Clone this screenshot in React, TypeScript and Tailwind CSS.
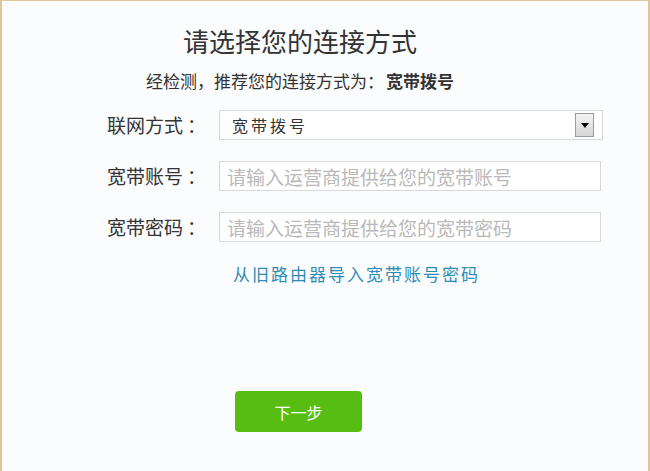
import React from "react";

const font = { fontFamily: '"Noto Sans CJK SC", "Noto Sans", sans-serif' };

const Label: React.FC<{ text: string }> = ({ text }) => (
  <div className="w-[112px] shrink-0 text-[19px] leading-[30px] text-[#333]">
    {text}
    <span className="ml-[4px]">：</span>
  </div>
);

const App: React.FC = () => {
  return (
    <div
      className="w-[650px] h-[471px] bg-[#fbfcfd] border-t border-l-2 border-r-2 border-[#e0c49a] overflow-hidden"
      style={font}
    >
      <div className="w-[596px] text-center">
        <h1 className="pt-[23px] text-[26px] leading-[34px] text-[#333]">请选择您的连接方式</h1>
        <p className="mt-[13px] text-[17px] leading-[20px] text-[#333]">
          经检测，推荐您的连接方式为：<span className="font-bold ml-[2px]">宽带拨号</span>
        </p>
      </div>

      <div className="ml-[105px] mt-[19px] flex flex-col gap-[21px]">
        <div className="flex items-center">
          <Label text="联网方式" />
          <div className="w-[384px] h-[30px] border border-[#d8d8d8] bg-white flex items-center justify-between pl-[12px] pr-[8px]">
            <span className="text-[16px] tracking-[3px] text-[#333]">宽带拨号</span>
            <div className="w-[19px] h-[24px] border border-[#9a9a9a] bg-gradient-to-b from-[#f4f4f4] to-[#d6d6d6] flex items-center justify-center">
              <div className="w-0 h-0 border-l-[4px] border-r-[4px] border-t-[5px] border-l-transparent border-r-transparent border-t-black" />
            </div>
          </div>
        </div>

        <div className="flex items-center">
          <Label text="宽带账号" />
          <input
            className="w-[382px] h-[30px] border border-[#d8d8d8] bg-white px-[7px] text-[19px] outline-none placeholder:text-[#b9b9b9]"
            placeholder="请输入运营商提供给您的宽带账号"
            style={font}
          />
        </div>

        <div className="flex items-center">
          <Label text="宽带密码" />
          <input
            className="w-[382px] h-[30px] border border-[#d8d8d8] bg-white px-[7px] text-[19px] outline-none placeholder:text-[#b9b9b9]"
            placeholder="请输入运营商提供给您的宽带密码"
            style={font}
          />
        </div>
      </div>

      <div className="ml-[231px] mt-[20px] text-[17px] leading-[24px] tracking-[2px] text-[#2e8bb5]">
        从旧路由器导入宽带账号密码
      </div>

      <button className="ml-[233px] mt-[105px] w-[127px] h-[41px] rounded-[4px] bg-[#58bd12] text-white text-[16px]">
        下一步
      </button>
    </div>
  );
};

export default App;
